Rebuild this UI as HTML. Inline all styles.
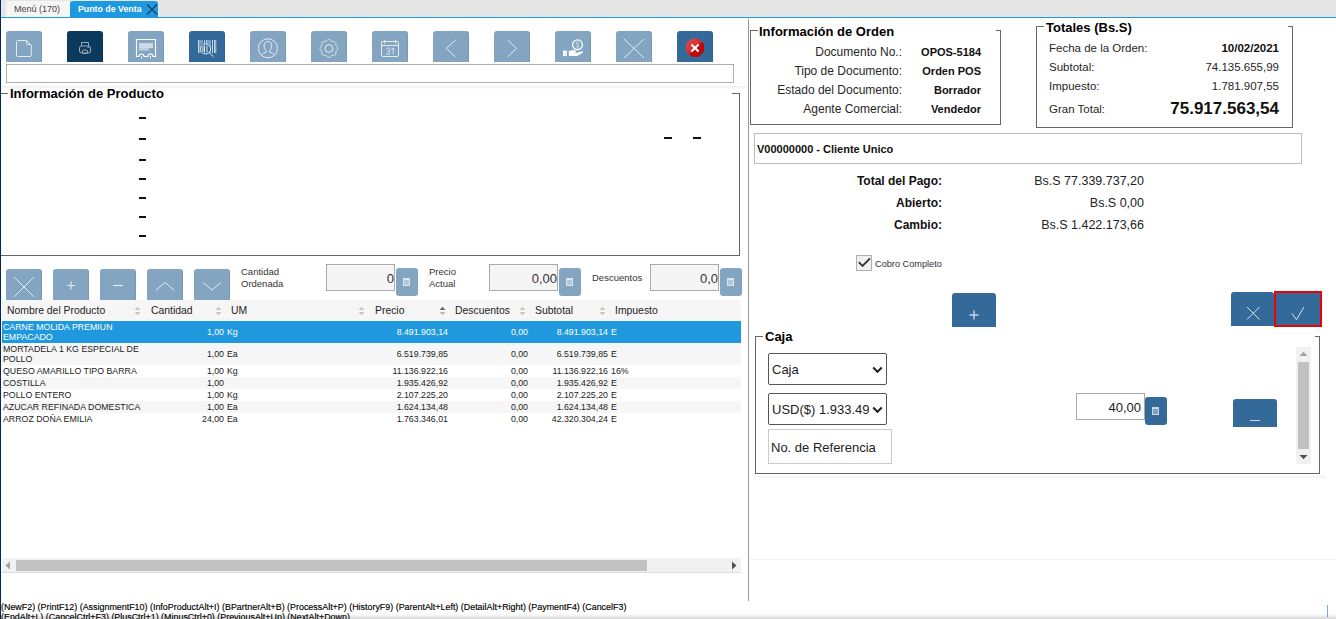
<!DOCTYPE html>
<html><head><meta charset="utf-8">
<style>
*,*:after,*:before{box-sizing:border-box;margin:0;padding:0}
html,body{width:1336px;height:619px;overflow:hidden;background:#fff;font-family:"Liberation Sans",sans-serif;color:#222}
.a{position:absolute}
#topbar{left:0;top:0;width:1336px;height:18px;background:#e6e6e6}
#lbar{left:0;top:0;width:1px;height:619px;background:#002860}
.tab1{left:6px;top:1px;width:64px;height:16px;background:#f5f5f5;font-size:9px;color:#444;line-height:16px;padding-left:8px}
.tab2{left:70px;top:1px;width:88px;height:17px;background:#1e98de;border-radius:3px 3px 0 0;font-size:8.8px;font-weight:bold;color:#fff;line-height:16px;padding-left:8px}
#tabline{left:0;top:17px;width:1336px;height:1px;background:#1e98de}
.tb{width:36px;height:31px;background:#83a5c1;border-radius:3px 3px 0 0;top:31px;box-shadow:inset -1px 0 0 rgba(0,0,0,0.07)}
.tb svg{position:absolute;left:0;top:0}
.hl{height:1px;background:#666}
.lg{position:absolute;background:#fff;font-weight:bold;font-size:13px;color:#000;white-space:nowrap}
.r{text-align:right;white-space:nowrap}
.lbl{font-size:12px;color:#262626;white-space:nowrap}
.inp{border:1px solid #aaa;background:#f5f5f5;font-size:13px;text-align:right;padding-right:0;line-height:28px;color:#333}
.cb{width:22px;height:28px;background:#83a5c1;border-radius:3px}
.cb:after{content:"";position:absolute;left:7px;top:10px;width:7px;height:8px;border:1px solid #dbe5ee;border-top-width:2px;background:#b3c7d9}
.th{top:304px;font-size:10.4px;color:#222;line-height:14px;white-space:nowrap}
.tr{left:2px;width:739px}
.tdn{font-size:8.8px;line-height:10px;white-space:nowrap}
.td{font-size:8.8px;line-height:10px;white-space:nowrap}
.val{font-size:11px;font-weight:bold;color:#111;line-height:14px}
.bb{background:#336a9a;border-radius:3px 3px 0 0}
.sel{border:1px solid #555;border-radius:2px;font-size:13px;color:#222;line-height:32px;padding-left:3px;white-space:nowrap;background:#fff}

.cb2{width:22px;height:28px;background:#336a9a;border-radius:3px}
.cb2:after{content:"";position:absolute;left:7px;top:10px;width:7px;height:8px;border:1px solid #c9d7e5;border-top-width:2px;background:#7f9fc0}
</style></head><body>
<div class="a" id="topbar"></div>
<div class="a tab1">Menú (170)</div>
<div class="a tab2">Punto de Venta</div>
<svg class="a" style="left:146px;top:4px" width="12" height="11"><path d="M1 0.5L11 10.5M11 0.5L1 10.5" stroke="#1b3d5a" stroke-width="1.1"/></svg>
<div class="a" id="tabline"></div>
<div class="a" id="lbar"></div>

<!-- toolbar -->
<div class="a tb" style="left:6px"><svg width="36" height="31"><path d="M11.7 9.5H20.5L25.3 14.3V24.3A1.2 1.2 0 0 1 24.1 25.5H11.7A1.2 1.2 0 0 1 10.5 24.3V10.7A1.2 1.2 0 0 1 11.7 9.5Z" fill="none" stroke="#e4ecf3" stroke-width="1"/><path d="M20.5 9.5V12.8A.8 .8 0 0 0 21.3 13.6H25.3" fill="none" stroke="#e4ecf3" stroke-width="1"/></svg></div>
<div class="a tb" style="left:67px;background:#0b3a5e"><svg width="36" height="31"><g fill="none" stroke="#aab8c6" stroke-width="0.9"><path d="M14.5 15v-3.5h7v3.5"/><rect x="12.5" y="15" width="11" height="7" rx="2"/><rect x="15.5" y="19" width="5" height="3.5" rx="1"/><path d="M20.5 16.5h1.5"/></g></svg></div>
<div class="a tb" style="left:128px"><svg width="36" height="31"><path d="M8.5 25.5V8.5H27.5V25.5H25A2.5 2.5 0 0 0 20 25.5H16A2.5 2.5 0 0 0 11 25.5Z" fill="none" stroke="#fff" stroke-width="1.1"/><rect x="11" y="12" width="14" height="5.2" fill="#c6d6e4"/><rect x="11" y="17.2" width="9.5" height="2.3" fill="#c6d6e4"/><path d="M11 14.1h14M11 16.3h14" stroke="#dde7ef" stroke-width="0.5"/><path d="M13.5 25.5v1.8M22.5 25.5v1.8" stroke="#fff" stroke-width="1"/></svg></div>
<div class="a tb" style="left:189px;background:#336a9a"><svg width="36" height="31"><g stroke="#e4ecf3" stroke-width="0.8"><path d="M9.5 9v13M11 9v13M13 9v4M15.5 9v4M17.5 9v4M19 9v4M21 9v13M23.5 9v13M25.5 9v13M26.8 9v13"/></g><circle cx="16.6" cy="18" r="5" fill="#336a9a" stroke="#e4ecf3" stroke-width="1"/><path d="M14 15.5v5M15.5 14.5v7M18 14.5v7" stroke="#e4ecf3" stroke-width="1"/><path d="M20.2 21.6l4.2 4.1" stroke="#e4ecf3" stroke-width="1"/></svg></div>
<div class="a tb" style="left:250px"><svg width="36" height="31"><circle cx="17.9" cy="17.3" r="9.5" fill="none" stroke="#e4ecf3" stroke-width="1"/><path d="M11.5 23.8c1.2-1.6 3-2 4.6-2.6v-1.5c-1.2-1-2-2.8-2-5.2 0-2.4 1.6-3.9 3.8-3.9s3.8 1.5 3.8 3.9c0 2.4-.8 4.2-2 5.2v1.5c1.6.6 3.4 1 4.6 2.6" fill="none" stroke="#e4ecf3" stroke-width="1"/></svg></div>
<div class="a tb" style="left:311px"><svg width="36" height="31"><path d="M26.85 17.40 L26.83 17.75 L26.76 18.10 L26.65 18.44 L26.48 18.76 L26.09 19.03 L25.69 19.27 L25.49 19.54 L25.33 19.81 L25.18 20.09 L25.06 20.37 L24.95 20.65 L24.86 20.95 L24.78 21.26 L24.74 21.59 L24.84 22.04 L24.93 22.50 L24.82 22.85 L24.66 23.17 L24.46 23.47 L24.23 23.73 L23.97 23.96 L23.67 24.16 L23.35 24.32 L23.00 24.43 L22.54 24.34 L22.09 24.24 L21.76 24.28 L21.45 24.36 L21.15 24.45 L20.87 24.56 L20.59 24.68 L20.31 24.83 L20.04 24.99 L19.77 25.19 L19.53 25.59 L19.26 25.98 L18.94 26.15 L18.60 26.26 L18.25 26.33 L17.90 26.35 L17.55 26.33 L17.20 26.26 L16.86 26.15 L16.54 25.98 L16.27 25.59 L16.03 25.19 L15.76 24.99 L15.49 24.83 L15.21 24.68 L14.93 24.56 L14.65 24.45 L14.35 24.36 L14.04 24.28 L13.71 24.24 L13.26 24.34 L12.80 24.43 L12.45 24.32 L12.13 24.16 L11.83 23.96 L11.57 23.73 L11.34 23.47 L11.14 23.17 L10.98 22.85 L10.87 22.50 L10.96 22.04 L11.06 21.59 L11.02 21.26 L10.94 20.95 L10.85 20.65 L10.74 20.37 L10.62 20.09 L10.47 19.81 L10.31 19.54 L10.11 19.27 L9.71 19.03 L9.32 18.76 L9.15 18.44 L9.04 18.10 L8.97 17.75 L8.95 17.40 L8.97 17.05 L9.04 16.70 L9.15 16.36 L9.32 16.04 L9.71 15.77 L10.11 15.53 L10.31 15.26 L10.47 14.99 L10.62 14.71 L10.74 14.43 L10.85 14.15 L10.94 13.85 L11.02 13.54 L11.06 13.21 L10.96 12.76 L10.87 12.30 L10.98 11.95 L11.14 11.63 L11.34 11.33 L11.57 11.07 L11.83 10.84 L12.13 10.64 L12.45 10.48 L12.80 10.37 L13.26 10.46 L13.71 10.56 L14.04 10.52 L14.35 10.44 L14.65 10.35 L14.93 10.24 L15.21 10.12 L15.49 9.97 L15.76 9.81 L16.03 9.61 L16.27 9.21 L16.54 8.82 L16.86 8.65 L17.20 8.54 L17.55 8.47 L17.90 8.45 L18.25 8.47 L18.60 8.54 L18.94 8.65 L19.26 8.82 L19.53 9.21 L19.77 9.61 L20.04 9.81 L20.31 9.97 L20.59 10.12 L20.87 10.24 L21.15 10.35 L21.45 10.44 L21.76 10.52 L22.09 10.56 L22.54 10.46 L23.00 10.37 L23.35 10.48 L23.67 10.64 L23.97 10.84 L24.23 11.07 L24.46 11.33 L24.66 11.63 L24.82 11.95 L24.93 12.30 L24.84 12.76 L24.74 13.21 L24.78 13.54 L24.86 13.85 L24.95 14.15 L25.06 14.43 L25.18 14.71 L25.33 14.99 L25.49 15.26 L25.69 15.53 L26.09 15.77 L26.48 16.04 L26.65 16.36 L26.76 16.70 L26.83 17.05Z" fill="none" stroke="#e4ecf3" stroke-width="1" stroke-linejoin="round"/><circle cx="18" cy="17.5" r="3.9" fill="none" stroke="#e4ecf3" stroke-width="1"/></svg></div>
<div class="a tb" style="left:372px"><svg width="36" height="31"><rect x="9.5" y="10.5" width="17" height="15" rx="1.5" fill="none" stroke="#e4ecf3" stroke-width="1"/><path d="M9.5 14.5h17M12.5 9v3.5M23.5 9v3.5" stroke="#e4ecf3" stroke-width="1"/><path d="M14.2 18.2C14.5 17.3 15.3 17 16 17C17 17 17.6 17.6 17.6 18.5C17.6 19.4 16.9 19.9 15.8 19.9C17 19.9 17.8 20.5 17.8 21.5C17.8 22.6 17 23.2 16 23.2C15 23.2 14.3 22.7 14.1 21.9M19.3 18.3L21.3 17V23.3" fill="none" stroke="#e4ecf3" stroke-width="0.9"/></svg></div>
<div class="a tb" style="left:433px"><svg width="36" height="31"><path d="M22.6 9L13.3 17.4L22.6 26" fill="none" stroke="#e4ecf3" stroke-width="1"/></svg></div>
<div class="a tb" style="left:494px"><svg width="36" height="31"><path d="M13.5 9L22.5 17.4L13.5 26" fill="none" stroke="#e4ecf3" stroke-width="1"/></svg></div>
<div class="a tb" style="left:555px"><svg width="36" height="31"><circle cx="22.5" cy="13.8" r="4.9" fill="none" stroke="#fff" stroke-width="1.3"/><path d="M23.8 12.2c-.3-.8-2.6-.9-2.6.4 0 1.3 2.7 1 2.7 2.4 0 1.4-2.4 1.3-2.8.5M22.5 10.8v1M22.5 16.6v1" fill="none" stroke="#eef3f7" stroke-width="0.8"/><rect x="8" y="19.5" width="3.8" height="5.6" fill="#fff"/><rect x="9.7" y="22.6" width="0.9" height="0.9" fill="#83a5c1"/><path d="M13.8 19.9C16 19.2 18.5 19 20.2 19.6C21.2 20 21.3 21.2 20.1 21.4L18.6 21.6L22 21.8L27.1 20.3C27.9 20.2 28.1 20.9 27.6 21.4C25 23.3 23 25.1 20 25.1L13.8 24.9Z" fill="#fff"/><path d="M19 21.6h2" stroke="#d0dde8" stroke-width="0.5"/></svg></div>
<div class="a tb" style="left:616px"><svg width="36" height="31"><path d="M8 8L28 27M28 8L8 27" stroke="#e4ecf3" stroke-width="1"/></svg></div>
<div class="a tb" style="left:677px;background:#336a9a"><svg width="36" height="31"><defs><linearGradient id="rg" x1="0" y1="0" x2="1" y2="1"><stop offset="0" stop-color="#e65050"/><stop offset="0.5" stop-color="#d42a2a"/><stop offset="0.55" stop-color="#c40a0a"/><stop offset="1" stop-color="#b50000"/></linearGradient></defs><path d="M14.27 7.8H21.73L27 13.07V20.53L21.73 25.8H14.27L9 20.53V13.07Z" fill="url(#rg)"/><path d="M14.4 13.4L21.6 20.5M21.6 13.4L14.4 20.5" stroke="#fff" stroke-width="2.1"/></svg></div>

<div class="a" style="left:6px;top:64px;width:728px;height:19px;border:1px solid #b0b0b0;background:#fff"></div>
<div class="a" style="left:2px;top:86px;width:745px;height:3px;background:linear-gradient(#efefef,#fdfdfd)"></div>

<!-- product info fieldset -->
<div class="a" style="left:1px;top:93px;width:739px;height:163px;border:1px solid #666;border-left:none;border-top:none"></div><div class="a hl" style="left:1px;top:93px;width:7px"></div><div class="a hl" style="left:732px;top:93px;width:8px"></div>
<div class="lg" style="left:8px;top:87px;padding:0 2px;line-height:14px;background:none">Información de Producto</div>


<!-- product info dashes -->
<div class="a" style="left:139px;top:117px;width:7px;height:2px;background:#111"></div>
<div class="a" style="left:139px;top:138px;width:7px;height:2px;background:#111"></div>
<div class="a" style="left:139px;top:159px;width:7px;height:2px;background:#111"></div>
<div class="a" style="left:139px;top:178px;width:7px;height:2px;background:#111"></div>
<div class="a" style="left:139px;top:197px;width:7px;height:2px;background:#111"></div>
<div class="a" style="left:139px;top:216px;width:7px;height:2px;background:#111"></div>
<div class="a" style="left:139px;top:235px;width:7px;height:2px;background:#111"></div>
<div class="a" style="left:664px;top:137px;width:8px;height:2px;background:#111"></div>
<div class="a" style="left:693px;top:137px;width:8px;height:2px;background:#111"></div>

<!-- line toolbar -->
<div class="a tb" style="left:6px;top:269px"><svg width="36" height="31"><path d="M8 8L28 28M28 8L8 28" stroke="#e4ecf3" stroke-width="1"/></svg></div>
<div class="a tb" style="left:53px;top:269px"><svg width="36" height="31"><path d="M18 12.5v8M14 16.5h8" stroke="#e4ecf3" stroke-width="1.2"/></svg></div>
<div class="a tb" style="left:100px;top:269px"><svg width="36" height="31"><path d="M13 16.5h10" stroke="#e4ecf3" stroke-width="1.2"/></svg></div>
<div class="a tb" style="left:147px;top:269px"><svg width="36" height="31"><path d="M9 21L18 13.5L27 21" fill="none" stroke="#e4ecf3" stroke-width="1"/></svg></div>
<div class="a tb" style="left:194px;top:269px"><svg width="36" height="31"><path d="M9 13.5L18 21L27 13.5" fill="none" stroke="#e4ecf3" stroke-width="1"/></svg></div>

<div class="a lbl" style="left:241px;top:266px;font-size:9.5px;line-height:12px;color:#333">Cantidad<br>Ordenada</div>
<div class="a inp" style="left:326px;top:264px;width:69px;height:27px">0</div>
<div class="a cb" style="left:396px;top:268px"></div>
<div class="a lbl" style="left:429px;top:266px;font-size:9.5px;line-height:12px;color:#333">Precio<br>Actual</div>
<div class="a inp" style="left:489px;top:264px;width:69px;height:27px">0,00</div>
<div class="a cb" style="left:559px;top:268px"></div>
<div class="a lbl" style="left:592px;top:272px;font-size:9.5px;line-height:12px;color:#333">Descuentos</div>
<div class="a inp" style="left:650px;top:264px;width:69px;height:27px">0,0</div>
<div class="a cb" style="left:720px;top:268px"></div>


<!-- table -->
<div class="a" style="left:2px;top:300px;width:739px;height:21px;background:#f6f6f6"></div>
<div class="a th" style="left:7px">Nombre del Producto</div><svg class="a" style="left:134px;top:306px" width="7" height="10"><path d="M0.5 4L3.5 0.8L6.5 4z" fill="#c6c6bb"/><path d="M0.5 6L3.5 9.2L6.5 6z" fill="#c6c6bb"/></svg><div class="a th" style="left:151px">Cantidad</div><svg class="a" style="left:215px;top:306px" width="7" height="10"><path d="M0.5 4L3.5 0.8L6.5 4z" fill="#c6c6bb"/><path d="M0.5 6L3.5 9.2L6.5 6z" fill="#c6c6bb"/></svg><div class="a th" style="left:231px">UM</div><svg class="a" style="left:358px;top:306px" width="7" height="10"><path d="M0.5 4L3.5 0.8L6.5 4z" fill="#c6c6bb"/><path d="M0.5 6L3.5 9.2L6.5 6z" fill="#c6c6bb"/></svg><div class="a th" style="left:375px">Precio</div><svg class="a" style="left:439px;top:306px" width="7" height="10"><path d="M0.5 4L3.5 0.8L6.5 4z" fill="#6c6c5e"/><path d="M0.5 6L3.5 9.2L6.5 6z" fill="#b9b9ac"/></svg><div class="a th" style="left:455px">Descuentos</div><svg class="a" style="left:519px;top:306px" width="7" height="10"><path d="M0.5 4L3.5 0.8L6.5 4z" fill="#c6c6bb"/><path d="M0.5 6L3.5 9.2L6.5 6z" fill="#c6c6bb"/></svg><div class="a th" style="left:535px">Subtotal</div><svg class="a" style="left:599px;top:306px" width="7" height="10"><path d="M0.5 4L3.5 0.8L6.5 4z" fill="#c6c6bb"/><path d="M0.5 6L3.5 9.2L6.5 6z" fill="#c6c6bb"/></svg><div class="a th" style="left:615px">Impuesto</div>
<div class="a tr" style="top:321px;height:22px;background:#1f98dd;color:#fff"><div class="a tdn" style="left:1px;top:1px">CARNE MOLIDA PREMIUN<br>EMPACADO</div><div class="a td r" style="right:517px;top:6px">1,00</div><div class="a td" style="left:225px;top:6px">Kg</div><div class="a td r" style="right:293px;top:6px">8.491.903,14</div><div class="a td r" style="right:213px;top:6px">0,00</div><div class="a td r" style="right:133px;top:6px">8.491.903,14</div><div class="a td" style="left:609px;top:6px">E</div></div>
<div class="a tr" style="top:343px;height:22px;background:#f6f6f6;color:#222"><div class="a tdn" style="left:1px;top:1px">MORTADELA 1 KG ESPECIAL DE<br>POLLO</div><div class="a td r" style="right:517px;top:6px">1,00</div><div class="a td" style="left:225px;top:6px">Ea</div><div class="a td r" style="right:293px;top:6px">6.519.739,85</div><div class="a td r" style="right:213px;top:6px">0,00</div><div class="a td r" style="right:133px;top:6px">6.519.739,85</div><div class="a td" style="left:609px;top:6px">E</div></div>
<div class="a tr" style="top:365px;height:12px;background:#fff;color:#222"><div class="a tdn" style="left:1px;top:1px">QUESO AMARILLO TIPO BARRA</div><div class="a td r" style="right:517px;top:1px">1,00</div><div class="a td" style="left:225px;top:1px">Kg</div><div class="a td r" style="right:293px;top:1px">11.136.922,16</div><div class="a td r" style="right:213px;top:1px">0,00</div><div class="a td r" style="right:133px;top:1px">11.136.922,16</div><div class="a td" style="left:609px;top:1px">16%</div></div>
<div class="a tr" style="top:377px;height:12px;background:#f6f6f6;color:#222"><div class="a tdn" style="left:1px;top:1px">COSTILLA</div><div class="a td r" style="right:517px;top:1px">1,00</div><div class="a td" style="left:225px;top:1px"></div><div class="a td r" style="right:293px;top:1px">1.935.426,92</div><div class="a td r" style="right:213px;top:1px">0,00</div><div class="a td r" style="right:133px;top:1px">1.935.426,92</div><div class="a td" style="left:609px;top:1px">E</div></div>
<div class="a tr" style="top:389px;height:12px;background:#fff;color:#222"><div class="a tdn" style="left:1px;top:1px">POLLO ENTERO</div><div class="a td r" style="right:517px;top:1px">1,00</div><div class="a td" style="left:225px;top:1px">Kg</div><div class="a td r" style="right:293px;top:1px">2.107.225,20</div><div class="a td r" style="right:213px;top:1px">0,00</div><div class="a td r" style="right:133px;top:1px">2.107.225,20</div><div class="a td" style="left:609px;top:1px">E</div></div>
<div class="a tr" style="top:401px;height:12px;background:#f6f6f6;color:#222"><div class="a tdn" style="left:1px;top:1px">AZUCAR REFINADA DOMESTICA</div><div class="a td r" style="right:517px;top:1px">1,00</div><div class="a td" style="left:225px;top:1px">Ea</div><div class="a td r" style="right:293px;top:1px">1.624.134,48</div><div class="a td r" style="right:213px;top:1px">0,00</div><div class="a td r" style="right:133px;top:1px">1.624.134,48</div><div class="a td" style="left:609px;top:1px">E</div></div>
<div class="a tr" style="top:413px;height:12px;background:#fff;color:#222"><div class="a tdn" style="left:1px;top:1px">ARROZ DOÑA EMILIA</div><div class="a td r" style="right:517px;top:1px">24,00</div><div class="a td" style="left:225px;top:1px">Ea</div><div class="a td r" style="right:293px;top:1px">1.763.346,01</div><div class="a td r" style="right:213px;top:1px">0,00</div><div class="a td r" style="right:133px;top:1px">42.320.304,24</div><div class="a td" style="left:609px;top:1px">E</div></div>
<div class="a" style="left:2px;top:558px;width:739px;height:15px;background:#f1f1f1;border-bottom:1px solid #ddd"></div>
<div class="a" style="left:16px;top:560px;width:631px;height:11px;background:#c1c1c1"></div>
<svg class="a" style="left:5px;top:561px" width="6" height="9"><path d="M5 0.5v8L0.5 4.5z" fill="#a3a3a3"/></svg>
<svg class="a" style="left:731px;top:561px" width="6" height="9"><path d="M1 0.5v8L5.5 4.5z" fill="#505050"/></svg>


<!-- right panel -->
<div class="a" style="left:750px;top:30px;width:251px;height:95px;border:1px solid #666;border-top:none"></div><div class="a hl" style="left:750px;top:30px;width:8px"></div><div class="a hl" style="left:996px;top:30px;width:5px"></div>
<div class="lg" style="left:757px;top:25px;padding:0 2px;line-height:14px;background:none">Información de Orden</div>
<div class="a lbl r" style="right:434px;top:45px;line-height:14px">Documento No.:</div>
<div class="a lbl r" style="right:434px;top:64px;line-height:14px">Tipo de Documento:</div>
<div class="a lbl r" style="right:434px;top:83px;line-height:14px">Estado del Documento:</div>
<div class="a lbl r" style="right:434px;top:102px;line-height:14px">Agente Comercial:</div>
<div class="a val r" style="right:355px;top:45px">OPOS-5184</div>
<div class="a val r" style="right:355px;top:64px">Orden POS</div>
<div class="a val r" style="right:355px;top:83px">Borrador</div>
<div class="a val r" style="right:355px;top:102px">Vendedor</div>

<div class="a" style="left:1036px;top:26px;width:257px;height:102px;border:1px solid #666;border-top:none"></div><div class="a hl" style="left:1036px;top:26px;width:8px"></div><div class="a hl" style="left:1288px;top:26px;width:5px"></div>
<div class="lg" style="left:1044px;top:21px;padding:0 2px;line-height:14px;background:none">Totales (Bs.S)</div>
<div class="a lbl" style="left:1049px;top:41px;line-height:14px;font-size:11.5px">Fecha de la Orden:</div>
<div class="a lbl" style="left:1049px;top:60px;line-height:14px;font-size:11.5px">Subtotal:</div>
<div class="a lbl" style="left:1049px;top:79px;line-height:14px;font-size:11.5px">Impuesto:</div>
<div class="a lbl" style="left:1049px;top:102px;line-height:14px;font-size:11.5px">Gran Total:</div>
<div class="a r" style="right:57px;top:41px;line-height:14px;font-size:11.5px;font-weight:bold;color:#111">10/02/2021</div>
<div class="a lbl r" style="right:57px;top:60px;line-height:14px;font-size:11.5px">74.135.655,99</div>
<div class="a lbl r" style="right:57px;top:79px;line-height:14px;font-size:11.5px">1.781.907,55</div>
<div class="a r" style="right:57px;top:99px;line-height:20px;font-size:17px;font-weight:bold;color:#111">75.917.563,54</div>

<div class="a" style="left:754px;top:133px;width:548px;height:31px;border:1px solid #bbb"></div>
<div class="a" style="left:757px;top:142px;font-size:11px;font-weight:bold;color:#111;line-height:14px;white-space:nowrap">V00000000 - Cliente Unico</div>

<div class="a r" style="right:394px;top:173px;font-size:12px;font-weight:bold;color:#111;line-height:16px">Total del Pago:</div>
<div class="a r" style="right:394px;top:195px;font-size:12px;font-weight:bold;color:#111;line-height:16px">Abierto:</div>
<div class="a r" style="right:394px;top:217px;font-size:12px;font-weight:bold;color:#111;line-height:16px">Cambio:</div>
<div class="a r" style="right:192px;top:173px;font-size:12.5px;color:#222;line-height:16px">Bs.S 77.339.737,20</div>
<div class="a r" style="right:192px;top:195px;font-size:12.5px;color:#222;line-height:16px">Bs.S 0,00</div>
<div class="a r" style="right:192px;top:217px;font-size:12.5px;color:#222;line-height:16px">Bs.S 1.422.173,66</div>

<div class="a" style="left:856px;top:255px;width:16px;height:16px;border:1px solid #a3b3c3;background:#f0f0f0"></div>
<svg class="a" style="left:856px;top:255px" width="16" height="16"><path d="M2.8 7.2L6.5 10.9L14 3.4" fill="none" stroke="#333" stroke-width="1.9"/></svg>
<div class="a" style="left:875px;top:258px;font-size:9.2px;color:#333;line-height:12px;white-space:nowrap">Cobro Completo</div>

<div class="a bb" style="left:952px;top:293px;width:44px;height:34px"><svg width="44" height="34"><path d="M22 17.5v9M17.5 22h9" stroke="#c8d6e6" stroke-width="1.4"/></svg></div>
<div class="a bb" style="left:1231px;top:292px;width:43px;height:34px"><svg width="43" height="34"><path d="M16 15L28.5 27.5M28.5 15L16 27.5" stroke="#d8e3ee" stroke-width="1"/></svg></div>
<div class="a" style="left:1274px;top:291px;width:48px;height:36px;border:2px solid #f00000;background:#336a9a;border-radius:0"><svg class="a" style="left:-2px;top:-2px" width="48" height="36"><path d="M17.9 22.4L22.5 28.7L29.8 16.1" fill="none" stroke="#d8e3ee" stroke-width="1"/></svg></div>

<div class="a" style="left:755px;top:336px;width:565px;height:138px;border:1px solid #666;border-top:none"></div><div class="a hl" style="left:755px;top:336px;width:8px"></div><div class="a hl" style="left:1315px;top:336px;width:5px"></div>
<div class="lg" style="left:763px;top:330px;padding:0 2px;line-height:14px;background:none">Caja</div>
<div class="a sel" style="left:768px;top:353px;width:119px;height:32px">Caja<svg class="a" style="right:1px;top:1px" width="15" height="28"><rect width="15" height="28" fill="#fff"/><path d="M3.2 12.5L7.5 16.8L11.8 12.5" fill="none" stroke="#222" stroke-width="2"/></svg></div>
<div class="a sel" style="left:768px;top:393px;width:119px;height:32px;overflow:hidden">USD($) 1.933.493<svg class="a" style="right:1px;top:1px" width="15" height="28"><rect width="15" height="28" fill="#fff"/><path d="M3.2 12.5L7.5 16.8L11.8 12.5" fill="none" stroke="#222" stroke-width="2"/></svg></div>
<div class="a" style="left:768px;top:429px;width:124px;height:35px;border:1px solid #ccc;font-size:13px;color:#222;line-height:35px;padding-left:2px;white-space:nowrap">No. de Referencia</div>
<div class="a" style="left:1076px;top:393px;width:69px;height:27px;border:1px solid #aaa;font-size:13px;text-align:right;padding-right:3px;line-height:27px;color:#222">40,00</div>
<div class="a cb2" style="left:1145px;top:397px"></div>
<div class="a bb" style="left:1233px;top:399px;width:44px;height:28px"><div class="a" style="left:17px;top:21px;width:10px;height:1px;background:#c8d6e6"></div></div>
<div class="a" style="left:1296px;top:347px;width:15px;height:117px;background:#f1f1f1"></div>
<div class="a" style="left:1298px;top:362px;width:11px;height:87px;background:#c1c1c1"></div>
<svg class="a" style="left:1299px;top:351px" width="9" height="6"><path d="M0.5 5L4.5 0.8L8.5 5z" fill="#a3a3a3"/></svg>
<svg class="a" style="left:1299px;top:454px" width="9" height="6"><path d="M0.5 1L4.5 5.2L8.5 1z" fill="#505050"/></svg>
<div class="a" style="left:755px;top:476px;width:571px;height:2px;background:linear-gradient(#f0f0f0,#fafafa)"></div>
<div class="a" style="left:749px;top:559px;width:587px;height:1px;background:#f2f2f2"></div>
<div class="a" style="left:1327px;top:605px;width:1px;height:12px;background:#7aa7f0"></div>

<!-- footer -->
<div class="a" style="left:1px;top:602px;font-size:8.92px;line-height:10px;color:#000;-webkit-text-stroke:0.15px #000;white-space:nowrap">(NewF2) (PrintF12) (AssignmentF10) (InfoProductAlt+I) (BPartnerAlt+B) (ProcessAlt+P) (HistoryF9) (ParentAlt+Left) (DetailAlt+Right) (PaymentF4) (CancelF3)<br>(EndAlt+L) (CancelCtrl+F3) (PlusCtrl+1) (MinusCtrl+0) (PreviousAlt+Up) (NextAlt+Down)</div>
<div class="a" style="left:0;top:613px;width:1336px;height:6px;background:linear-gradient(rgba(0,0,0,0),rgba(0,0,0,0.03) 35%,rgba(0,0,0,0.17))"></div>

<!-- divider -->
<div class="a" style="left:748px;top:19px;width:1px;height:582px;background:#999"></div>

</body></html>
